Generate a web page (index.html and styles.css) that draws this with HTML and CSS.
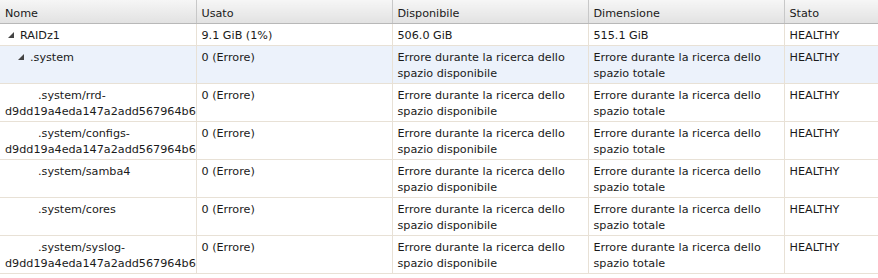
FILE: index.html
```html
<!DOCTYPE html>
<html>
<head>
<meta charset="utf-8">
<link rel="stylesheet" href="styles.css">
</head>
<body>
<table class="grid">
  <colgroup>
    <col class="c-name"><col class="c-used"><col class="c-avail"><col class="c-size"><col class="c-state">
  </colgroup>
  <thead>
    <tr><th>Nome</th><th>Usato</th><th>Disponibile</th><th>Dimensione</th><th>Stato</th></tr>
  </thead>
  <tbody>
    <tr>
      <td><span class="indent l0"></span><svg class="exp" width="6" height="6" viewBox="0 0 6 6"><polygon points="0,6 6,6 6,0"/></svg><span>RAIDz1</span></td>
      <td>9.1 GiB (1%)</td><td>506.0 GiB</td><td>515.1 GiB</td><td>HEALTHY</td>
    </tr>
    <tr class="sel">
      <td><span class="indent l1"></span><svg class="exp" width="6" height="6" viewBox="0 0 6 6"><polygon points="0,6 6,6 6,0"/></svg><span>.system</span></td>
      <td>0 (Errore)</td><td>Errore durante la ricerca dello spazio disponibile</td><td>Errore durante la ricerca dello spazio totale</td><td>HEALTHY</td>
    </tr>
    <tr>
      <td><span class="indent l2"></span>.system/rrd-d9dd19a4eda147a2add567964b66c1f0</td>
      <td>0 (Errore)</td><td>Errore durante la ricerca dello spazio disponibile</td><td>Errore durante la ricerca dello spazio totale</td><td>HEALTHY</td>
    </tr>
    <tr>
      <td><span class="indent l2"></span>.system/configs-d9dd19a4eda147a2add567964b66c1f0</td>
      <td>0 (Errore)</td><td>Errore durante la ricerca dello spazio disponibile</td><td>Errore durante la ricerca dello spazio totale</td><td>HEALTHY</td>
    </tr>
    <tr>
      <td><span class="indent l2"></span>.system/samba4</td>
      <td>0 (Errore)</td><td>Errore durante la ricerca dello spazio disponibile</td><td>Errore durante la ricerca dello spazio totale</td><td>HEALTHY</td>
    </tr>
    <tr>
      <td><span class="indent l2"></span>.system/cores</td>
      <td>0 (Errore)</td><td>Errore durante la ricerca dello spazio disponibile</td><td>Errore durante la ricerca dello spazio totale</td><td>HEALTHY</td>
    </tr>
    <tr>
      <td><span class="indent l2"></span>.system/syslog-d9dd19a4eda147a2add567964b66c1f0</td>
      <td>0 (Errore)</td><td>Errore durante la ricerca dello spazio disponibile</td><td>Errore durante la ricerca dello spazio totale</td><td>HEALTHY</td>
    </tr>
  </tbody>
</table>
</body>
</html>
```

FILE: styles.css
```css
html, body {
  margin: 0;
  padding: 0;
  background: #ffffff;
}
body {
  font-family: "DejaVu Sans", Verdana, sans-serif;
  font-size: 11.2px;
  color: #1a1a1a;
}
.grid {
  border-collapse: collapse;
  table-layout: fixed;
  width: 878px;
}
.c-name, .c-used, .c-avail, .c-size { width: 196px; }
.grid th {
  text-align: left;
  font-weight: normal;
  height: 16px;
  line-height: 16px;
  padding: 6px 5px 1px 5px;
  background: linear-gradient(#f6f6f6, #e2e2e2);
  border-right: 1px solid #c8c8c8;
  border-bottom: 1px solid #b8b8b8;
  color: #1a1a1a;
}
.grid td {
  vertical-align: top;
  line-height: 16px;
  padding: 4px 5px 1px 5px;
  border-right: 1px solid #e8e1d6;
  border-bottom: 1px solid #e8e1d6;
  overflow: hidden;
  white-space: normal;
}
.grid tr > :last-child { border-right: none; }
.sel td { background: #ecf2fb; }
.indent { display: inline-block; height: 1px; }
.indent.l0 { width: 3px; }
.indent.l1 { width: 13px; }
.indent.l2 { width: 33px; }
.exp {
  display: inline-block;
  fill: #444444;
  margin-right: 6px;
  vertical-align: 1px;
}
```
